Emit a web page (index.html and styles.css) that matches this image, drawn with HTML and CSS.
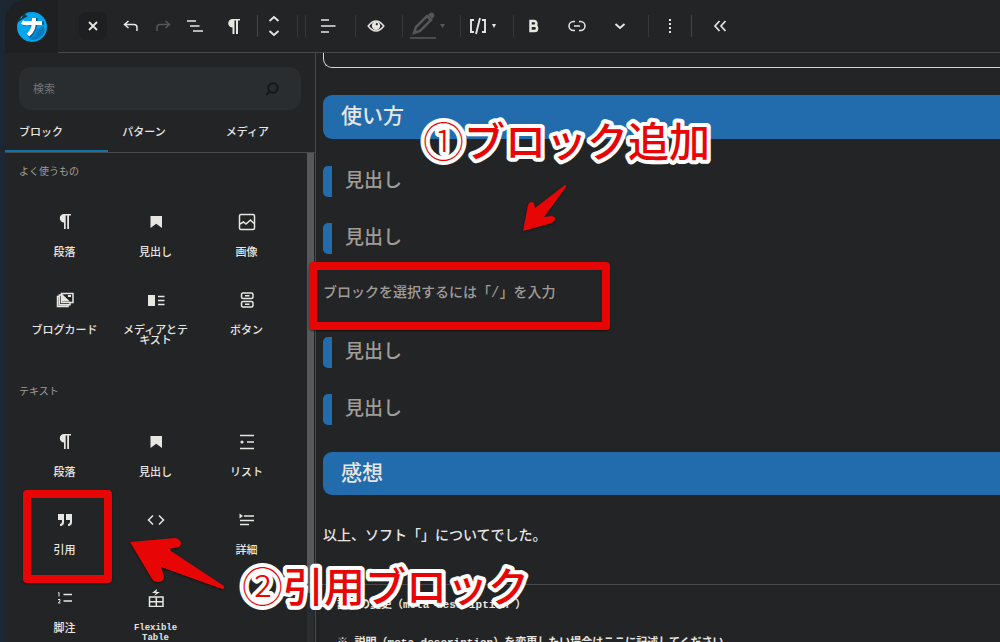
FILE: index.html
```html
<!DOCTYPE html>
<html lang="ja">
<head>
<meta charset="utf-8">
<title>ブロックエディター</title>
<link rel="stylesheet" href="styles.css">
</head>
<body>
<div class="editor">
  <header class="toolbar">
    <a class="logo" href="#" aria-label="サイト">
      <svg width="32" height="34" viewBox="0 0 32 34" stroke="none"><circle cx="16" cy="17" r="15" fill="#03a5ec"/><path d="M1 13 L2 9 L6 8 L7 4 L12 1 L9 5 L12 6 L5 10Z" fill="#173746"/><path d="M13 29 C18 27 20 24 21 19 L28 16 L29 21 C27 26 23 29 18 30Z" fill="#067cc0"/><path d="M7 14 L28 13 M20 8 C20 17 18 23 13 27" fill="none" stroke="#0b5b93" stroke-width="3.500"/><path d="M6 12 Q9 14 13 13 L26 13 M18 8 C18 17 17 21 12 25" fill="none" stroke="#fff" stroke-width="4" stroke-linejoin="round"/></svg>
    </a>
    <div class="tools">
      <button class="tool close" aria-label="閉じる"><svg width="10" height="10" viewBox="0 0 10 10"><path d="M1 1 9 9M9 1 1 9" stroke-width="1.800"/></svg></button>
      <button class="tool t-undo" aria-label="元に戻す"><svg width="16" height="14" viewBox="0 0 16 14"><path d="M5.500 2 1.500 5.500 5.500 9M2 5.500H11Q14 5.500 14 8.500V12"/></svg></button>
      <button class="tool t-redo dim" aria-label="やり直す"><svg width="16" height="14" viewBox="0 0 16 14"><path d="M10.500 2 14.500 5.500 10.500 9M14 5.500H5Q2 5.500 2 8.500V12"/></svg></button>
      <button class="tool t-overview" aria-label="概要"><svg width="18" height="14" viewBox="0 0 18 14"><path d="M1 2H10M4 7H13.500M7 12H17"/></svg></button>
      <button class="tool t-para" aria-label="段落"><svg width="14" height="16" viewBox="0 0 14 16"><path class="solid" d="M5.500 1A4.300 4.300 0 0 0 5.500 9.600V16H7.500V2.500H9V16H11V2.500H13V1Z"/></svg></button>
      <span class="rule bright"></span>
      <button class="tool t-move" aria-label="移動"><svg width="12" height="22" viewBox="0 0 12 22"><path d="M1.500 6 6 2 10.500 6M1.500 16 6 20 10.500 16" stroke-width="1.800"/></svg></button>
      <span class="rule"></span>
      <span class="rule twin"></span>
      <button class="tool t-align" aria-label="配置"><svg width="16" height="16" viewBox="0 0 16 16"><path d="M1 2H9M1 8H15.500M1 14H9" stroke-width="1.700"/></svg></button>
      <span class="rule"></span>
      <button class="tool t-eye" aria-label="表示"><svg width="18" height="12" viewBox="0 0 18 12"><path d="M1.200 6Q9-4 16.800 6Q9 16 1.200 6Z"/><circle cx="9" cy="5.800" r="4.200" class="solid"/><circle cx="9.800" cy="4.200" r="1.100" fill="#232425" stroke="none"/></svg></button>
      <span class="rule"></span>
      <button class="tool t-pen dim" aria-label="マーカー"><svg width="40" height="28" viewBox="0 0 40 28"><path d="M5 21 7 15 18 4 22 8 11 19Z" stroke-width="2.500"/><path class="solid" d="M19 3 21 1 Q23 0 24.500 1.500 Q26 3 25 5L23 7Z"/><path d="M1 26H27" stroke-width="1.600"/><path class="solid" d="M31 12H36L33.500 16Z"/></svg></button>
      <span class="rule"></span>
      <button class="tool t-code" aria-label="ショートコード"><svg width="28" height="18" viewBox="0 0 28 18"><path d="M5 3H2V15H5M13 3H16V15H13M11 1 7 17" stroke-width="1.900"/><path class="solid" d="M23 7H27L25 11Z"/></svg></button>
      <span class="rule"></span>
      <button class="tool t-bold" aria-label="太字"><svg width="12" height="14" viewBox="0 0 12 14"><path d="M2.500 2H6A2.400 2.400 0 0 1 6 6.800H2.500H6.500A2.600 2.600 0 0 1 6.500 12H2.500Z" stroke-width="2.500"/></svg></button>
      <button class="tool t-link" aria-label="リンク"><svg width="18" height="12" viewBox="0 0 18 12"><path d="M7 1.500H5.500A4.500 4.500 0 0 0 5.500 10.500H7M11 1.500H12.500A4.500 4.500 0 0 1 12.500 10.500H11M6 6H12"/></svg></button>
      <button class="tool t-more" aria-label="さらに表示"><svg width="12" height="8" viewBox="0 0 12 8"><path d="M1.500 2 6 6 10.500 2" stroke-width="1.900"/></svg></button>
      <span class="rule"></span>
      <button class="tool t-options" aria-label="オプション"><svg width="4" height="14" viewBox="0 0 4 14"><path class="solid" d="M1 0H3V2H1ZM1 4H3V6H1ZM1 8H3V10H1ZM1 12H3V14H1Z"/></svg></button>
      <span class="rule bright"></span>
      <button class="tool t-collapse" aria-label="折りたたむ"><svg width="14" height="12" viewBox="0 0 14 12"><path d="M6.500 1 2 6 6.500 11M12.500 1 8 6 12.500 11" stroke-width="1.700"/></svg></button>
    </div>
  </header>

  <div class="body">
    <aside class="inserter">
      <label class="search">
        <input type="search" placeholder="検索" aria-label="検索">
        <svg width="14" height="14" viewBox="0 0 14 14"><circle cx="8" cy="6" r="4.700"/><path d="M5 9 1 13"/></svg>
      </label>
      <nav class="tabs">
        <button class="tab active">ブロック</button>
        <button class="tab">パターン</button>
        <button class="tab">メディア</button>
      </nav>
      <div class="scroller">
        <section class="group">
          <h2>よく使うもの</h2>
          <div class="blocks">
            <button class="block"><svg viewBox="0 0 18 18"><path class="solid" d="M8 1A4.200 4.200 0 0 0 8 9.400V16H9.700V2.500H11.200V16H13V2.500H15V1Z"/></svg><span>段落</span></button>
            <button class="block"><svg viewBox="0 0 18 18"><path class="solid" d="M3.500 3H15V15L9.200 10.800 3.500 15Z"/></svg><span>見出し</span></button>
            <button class="block"><svg viewBox="0 0 18 18"><rect x="1.500" y="1.500" width="15" height="15" rx="1.500"/><path d="M2 11 5.500 9 8 11 12.500 7 16 10.500"/></svg><span>画像</span></button>
            <button class="block"><svg viewBox="0 0 18 18"><path d="M3 5.500H1.500V15.500H12V14M5 4H3.300V13.700H14V12"/><rect x="5.500" y="2.500" width="11.500" height="9"/><path class="solid" d="M6 3 14 10.500H6ZM12 4H15V6H12Z"/></svg><span>ブログカード</span></button>
            <button class="block"><svg viewBox="0 0 18 18"><path class="solid" d="M1 4H8V15H1Z"/><path d="M11 5.500H17.500M11 9.500H17.500M11 13.500H17.500"/></svg><span>メディアとテキスト</span></button>
            <button class="block"><svg viewBox="0 0 18 18"><rect x="3.500" y="2" width="11.500" height="5.500" rx="1.500"/><rect x="3.500" y="10.500" width="11.500" height="5.500" rx="1.500"/><path d="M7 4.800H11.500M7 13.300H11.500"/></svg><span>ボタン</span></button>
          </div>
        </section>
        <section class="group">
          <h2>テキスト</h2>
          <div class="blocks">
            <button class="block"><svg viewBox="0 0 18 18"><path class="solid" d="M8 1A4.200 4.200 0 0 0 8 9.400V16H9.700V2.500H11.200V16H13V2.500H15V1Z"/></svg><span>段落</span></button>
            <button class="block"><svg viewBox="0 0 18 18"><path class="solid" d="M3.500 3H15V15L9.200 10.800 3.500 15Z"/></svg><span>見出し</span></button>
            <button class="block"><svg viewBox="0 0 18 18"><path d="M2 2.500H16M9 9H16M2 15.500H16"/><circle class="solid" cx="4" cy="9" r="1.600"/></svg><span>リスト</span></button>
            <button class="block"><svg viewBox="0 0 18 18"><path class="solid" d="M2 3H8V11Q8 15 4 15V13Q6 13 6 10V9H2ZM10 3H16V11Q16 15 12 15V13Q14 13 14 10V9H10Z"/></svg><span>引用</span></button>
            <button class="block"><svg viewBox="0 0 18 18"><path d="M6 4.500 1.500 9 6 13.500M12 4.500 16.500 9 12 13.500"/></svg><span>コード</span></button>
            <button class="block"><svg viewBox="0 0 18 18"><path class="solid" d="M1.500 2.500 5 5 1.500 7.500Z"/><path d="M6 5H16M2 9.500H16M2 13.500H11"/></svg><span>詳細</span></button>
            <button class="block"><svg viewBox="0 0 18 18"><path d="M7.500 5.500H16M7.500 12H16"/><path d="M2 4 3 3.500V7.500M2 10.500H4V12L2.300 14H4.500" stroke-width="1"/></svg><span>脚注</span></button>
            <button class="block"><svg viewBox="0 0 18 18"><rect x="2.500" y="8" width="13.500" height="9.500"/><path d="M9.300 8V17M2.500 12.700H16"/><path class="solid" d="M10 0 5 4 9 4 7 7 13 3 9.500 3Z"/></svg><span class="latin">Flexible Table</span></button>
          </div>
        </section>
      </div>
    </aside>

    <main class="canvas">
      <div class="frame-end"></div>
      <h2 class="banner">使い方</h2>
      <h3 class="sub">見出し</h3>
      <h3 class="sub">見出し</h3>
      <p class="prompt">ブロックを選択するには「/」を入力</p>
      <h3 class="sub">見出し</h3>
      <h3 class="sub">見出し</h3>
      <h2 class="banner second">感想</h2>
      <p class="closing">以上、ソフト「」についてでした。</p>
      <section class="meta">
        <h4>説明の変更（meta description ）</h4>
        <p>※ 説明（meta description）を変更したい場合はここに記述してください</p>
      </section>
    </main>
  </div>
</div>

<div class="mark mark-prompt"></div>
<div class="mark mark-quote"></div>
<svg class="arrow arrow-one" width="50" height="56" viewBox="0 0 50 56"><path d="M46 4Q48 4 47 6L25 36 33 35Q37 36 36 39L33 42 4 50 9 24Q11 19 15 22L16 27Z"/></svg>
<svg class="arrow arrow-two" width="104" height="60" viewBox="0 0 104 60"><path d="M4 9 49 5Q55 6 55 11 54 15 48 15L42 16 98 53Q99 56 96 56L35 34 38 43Q38 49 32 49 28 49 26 46Z"/></svg>
<svg class="note note-one" width="300" height="56"><text x="6" y="43"><tspan class="num">①</tspan>ブロック追加</text></svg>
<svg class="note note-two" width="300" height="56"><text x="6" y="43"><tspan class="num">②</tspan>引用ブロック</text></svg>
</body>
</html>
```
FILE: styles.css
```css
* { box-sizing: border-box; }
html, body { height: 100%; }
body {
  margin: 0;
  position: relative;
  overflow: hidden;
  padding-left: 5px;
  background: #1c2733;
  color: #e8e6e3;
  font-family: "Liberation Sans", "Noto Sans CJK JP", sans-serif;
}
h2, h3, h4, p { margin: 0; }
button { border: 0; padding: 0; background: none; color: inherit; font: inherit; }
svg { display: block; }
.tool svg, .search svg, .block svg { fill: none; stroke: currentColor; stroke-width: 1.5; }
.tool .solid, .block .solid { fill: currentColor; stroke: none; }

.editor {
  height: 100%;
  display: flex;
  flex-direction: column;
  overflow: hidden;
  border-top-left-radius: 22px;
  background: #232425;
}

/* Toolbar */
.toolbar { display: flex; flex: none; height: 53px; }
.logo { flex: none; width: 53px; display: grid; place-items: center; background: #1f2021; }
.tools {
  flex: 1;
  display: flex;
  align-items: center;
  padding-left: 21px;
  border-bottom: 1px solid #48494a;
}
.tool { flex: none; display: grid; place-items: center; height: 36px; }
.close { width: 28px; height: 28px; border-radius: 8px; background: #1e1f20; }
.dim { color: #55585a; }
.rule { flex: none; width: 1px; height: 22px; background: #36383a; }
.rule.bright { background: #45484a; }
.twin { margin-left: 7px; }
.t-undo { width: 48px; }
.t-redo { width: 16px; }
.t-overview { width: 48px; }
.t-para { width: 30px; margin-right: 8px; }
.t-move { width: 32px; margin-right: 7px; }
.t-align { width: 43px; margin-right: 6px; }
.t-eye { width: 40px; margin-right: 6px; }
.t-pen { width: 51px; margin-right: 6px; }
.t-code { width: 44px; margin-right: 8px; }
.t-bold { width: 40px; }
.t-link { width: 46px; }
.t-more { width: 40px; margin-right: 8px; }
.t-options { width: 42px; }
.t-collapse { width: 56px; }

/* Inserter */
.body { flex: 1; min-height: 0; display: flex; }
.inserter {
  flex: none;
  width: 311px;
  display: flex;
  flex-direction: column;
  border-right: 1px solid #48494a;
}
.search {
  flex: none;
  display: flex;
  align-items: center;
  height: 43px;
  margin: 14px 14px 0;
  padding: 0 22px 0 14px;
  border-radius: 12px;
  background: #2a2d2f;
}
.search input {
  flex: 1;
  min-width: 0;
  border: 0;
  outline: 0;
  padding: 0;
  background: none;
  color: inherit;
  font: 11px "Liberation Sans", "Noto Sans CJK JP", sans-serif;
}
.search input::placeholder { color: #737678; opacity: 1; }
.search svg { color: #151617; stroke-width: 2; }
.tabs { flex: none; display: flex; height: 43px; border-bottom: 1px solid #48494a; }
.tab { flex: 1; padding: 2px 0 2px 14px; text-align: left; font-size: 11px; font-weight: 500; }
.tab.active { border-bottom: 2px solid #1273ab; padding-bottom: 0; }
.scroller {
  flex: 1;
  min-height: 0;
  overflow: hidden;
  padding-right: 9px;
  background: linear-gradient(#55595b, #55595b) right 1px top / 7px 440px no-repeat,
    linear-gradient(#2a2d2f, #2a2d2f) right 1px top / 7px 100% no-repeat;
}
.group { padding: 11px 14px 0; }
.group h2 { font-size: 10px; line-height: 16px; font-weight: 400; color: #a09d98; }
.blocks {
  display: grid;
  grid-template-columns: repeat(3, 1fr);
  grid-auto-rows: 78px;
  padding: 26px 0 11px;
}
.block { display: flex; flex-direction: column; align-items: center; padding-top: 7px; }
.block svg { flex: none; width: 18px; height: 18px; }
.block span { width: 70px; margin-top: 16px; font-size: 11px; line-height: 10px; font-weight: 500; }
.block .latin { font-family: "Liberation Mono", monospace; font-size: 9px; font-weight: 700; }

/* Canvas */
.canvas { flex: 1; min-width: 0; padding-left: 7px; overflow: hidden; }
.frame-end {
  height: 15px;
  border: 1px solid #d5d3d0;
  border-width: 0 0 1px 1px;
  border-bottom-left-radius: 9px;
}
.banner {
  height: 44px;
  margin-top: 27px;
  padding-left: 18px;
  border-radius: 9px 0 0 9px;
  background: #226bad;
  font-size: 21px;
  line-height: 42px;
  font-weight: 500;
}
.banner.second { height: 43px; }
.sub {
  height: 31px;
  margin-top: 27px;
  padding-left: 13px;
  border-left: 9px solid #226bad;
  border-radius: 5px 0 0 5px;
  color: #a09d98;
  font-size: 19px;
  line-height: 29px;
  font-weight: 500;
}
.sub + .sub { margin-top: 26px; }
.prompt {
  margin-top: 27px;
  color: #a09d98;
  font-family: "Liberation Mono", "Noto Sans CJK JP", monospace;
  font-size: 14px;
  line-height: 24px;
  font-weight: 500;
}
.prompt + .sub { margin-top: 32px; }
.banner.second { margin-top: 27px; }
.closing { margin-top: 28px; font-size: 14px; line-height: 24px; font-weight: 500; }
.meta {
  margin-top: 37px;
  margin-left: -7px;
  padding: 11px 0 0 21px;
  border-top: 1px solid #48494a;
  font-family: "Liberation Mono", "Noto Sans CJK JP", monospace;
  font-size: 11px;
  line-height: 18px;
  font-weight: 700;
  white-space: nowrap;
}
.meta h4 { font-size: 11px; }
.meta p { margin-top: 20px; }

/* Tutorial annotations laid over the editor */
.mark { position: absolute; border: 8px solid #e80505; border-radius: 4px; box-shadow: 0 1px 2px #0008; }
.mark-prompt { left: 309px; top: 262px; width: 301px; height: 68px; }
.mark-quote { left: 23px; top: 490px; width: 89px; height: 93px; }
.arrow { position: absolute; fill: #e80505; filter: drop-shadow(0 1px 1px #0008); }
.arrow-one { left: 519px; top: 181px; }
.arrow-two { left: 126px; top: 533px; }
.note {
  position: absolute;
  overflow: visible;
  fill: #e80505;
  stroke: #fff;
  stroke-width: 8px;
  stroke-linejoin: round;
  paint-order: stroke fill;
  font-family: "Noto Sans CJK JP", sans-serif;
  font-size: 41px;
  font-weight: 500;
}
.note .num { font-weight: 300; }
.note-one { left: 417px; top: 114px; }
.note-two { left: 236px; top: 559px; }
```
